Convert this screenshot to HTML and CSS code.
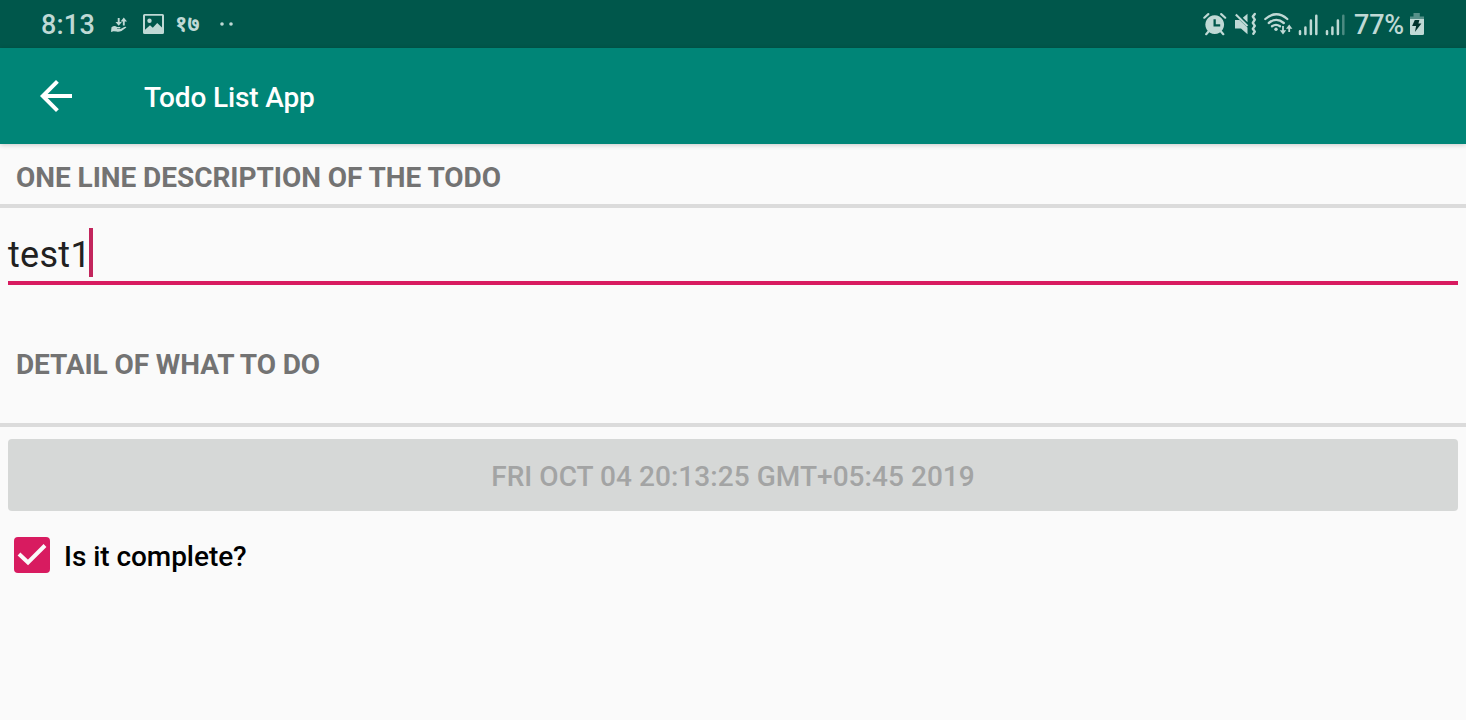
FILE: index.html
```html
<!DOCTYPE html>
<html lang="en">
<head>
<meta charset="utf-8">
<title>Todo List App</title>
<link rel="stylesheet" href="styles.css">
</head>
<body>
<div class="status">
  <span class="clock">8:13</span>
  <svg class="icon hand" width="18" height="24" viewBox="110 12 18 24">
    <g fill="none" stroke="currentColor" stroke-width="1.9"><path d="M118.700 18v6M123.800 25.500v-5.500"/></g>
    <path d="M115.500 22.100h6.400l-3.200 3.600zM120.600 21.500h6.400l-3.200-3.900zM111.500 27.300q3-2.200 5.500-.3l3 .1q1.200.8 0 1.500h-3v.4h3.500l3.800-2q2-.6 2 .5l-4.800 3.400q-2.500 1.200-5 .6l-3-.2-2.500.8z"/>
  </svg>
  <svg class="icon picture" width="22" height="24" viewBox="143 12 22 24">
    <path fill-rule="evenodd" d="M144.500 14h18q1.500 0 1.500 1.500v17q0 1.500-1.500 1.500h-18q-1.500 0-1.500-1.500v-17q0-1.500 1.500-1.500zM145 15.800v14l5-4.500 2.800 2.500 4.400-4.700 4.800 4.500v-11.800z"/><circle cx="149.500" cy="20.700" r="2.200"/>
  </svg>
  <span class="date">१७</span>
  <svg class="icon more" width="14" height="24" viewBox="219 12 14 24"><circle cx="222" cy="24" r="1.800"/><circle cx="231" cy="24" r="1.800"/></svg>
  <svg class="icon alarm" width="24" height="24" viewBox="1203 12 24 24">
    <path fill-rule="evenodd" d="M1214.700 15.200a9.400 9.400 0 1 0 .01 0zM1213.500 19.200h2.300v5h4.400v2.300h-6.700z"/>
    <path d="M1204.300 17.700l4-3.600M1225.200 17.700l-4-3.600M1208.500 31.500l-2.300 2.700M1221 31.500l2.300 2.700" fill="none" stroke="currentColor" stroke-width="2.200" stroke-linecap="round"/>
  </svg>
  <svg class="icon mute" width="24" height="24" viewBox="1234 12 24 24">
    <path d="M1235 20h4.500l8 7.500v6.700l-6.500-5.700h-6zM1242.800 17.800l4.700-4.100v8.500z"/>
    <path d="M1235.800 14.500l11.700 11.500" fill="none" stroke="currentColor" stroke-width="2.100"/>
    <path d="M1254.800 14l-2 2.600 2 3-2 3.200 2 3-2 3 2 2.800-1.500 2.200" fill="none" stroke="currentColor" stroke-width="2.400" stroke-linejoin="round" stroke-linecap="round"/>
  </svg>
  <svg class="icon wifi" width="30" height="24" viewBox="1264 12 30 24">
    <g fill="none" stroke="currentColor" stroke-width="2.300" stroke-linecap="round"><path d="M1265.300 19q11-9.500 22 0M1268.800 23q7.500-6.300 15 0M1272 26.300q4-2.800 8 0"/></g>
    <circle cx="1276" cy="29.300" r="1.700"/>
    <g fill="none" stroke="currentColor" stroke-width="1.800"><path d="M1283 26v6M1289.200 32v-5"/></g><path d="M1279.800 30.300h6.400l-3.200 4.200zM1286 28.800h6.400l-3.200-4.200z"/>
  </svg>
  <svg class="icon signal" width="21" height="24" viewBox="1298 12 21 24"><path d="M1300 34v-2.700M1305.400 34v-6.500M1310.900 34v-13.500M1316.300 34v-18.300" fill="none" stroke="currentColor" stroke-width="2.500" stroke-linecap="round"/></svg>
  <svg class="icon signal2" width="21" height="24" viewBox="1325 12 21 24"><g fill="none" stroke="currentColor" stroke-width="2.500" stroke-linecap="round"><path d="M1327 34v-2.700M1332.400 34v-6.500M1337.900 34v-13.500"/><path opacity=".4" d="M1343.300 34v-18.300"/></g></svg>
  <span class="percent">77%</span>
  <svg class="icon battery" width="16" height="24" viewBox="1409 12 16 24"><path opacity=".45" d="M1413.500 13h6.300v3.500h4.200v3h-14v-3h3.500z"/><path d="M1410 19h14v14.500q0 1.500-1.500 1.500h-11q-1.500 0-1.500-1.500z"/><path class="bolt" d="M1414.800 20h4.600l-1 3.600h3l-6.500 8.400 1.200-6h-4z"/></svg>
</div>
<header class="toolbar">
  <svg class="back" width="48" height="48" viewBox="0 0 24 24"><path d="M20 11H7.830l5.590-5.590L12 4l-8 8 8 8 1.410-1.410L7.830 13H20v-2z"/></svg>
  <h1 class="title">Todo List App</h1>
</header>
<main class="form">
  <div class="heading"><span>ONE LINE DESCRIPTION OF THE TODO</span></div>
  <div class="field"><span class="value">test1</span><span class="caret"></span></div>
  <div class="heading detail"><span>DETAIL OF WHAT TO DO</span></div>
  <div class="date-button"><span>FRI OCT 04 20:13:25 GMT+05:45 2019</span></div>
  <div class="check-row">
    <svg class="checkbox" width="36" height="36" viewBox="0 0 36 36"><rect width="36" height="36" rx="4"/><path d="M5 17l9 8.500 17-17"/></svg>
    <span class="check-label">Is it complete?</span>
  </div>
</main>
</body>
</html>
```
FILE: styles.css
```css
* { box-sizing: border-box; }
body { margin: 0; width: 1466px; height: 720px; overflow: hidden; background: #fafafa; font-family: Roboto, "Noto Sans", sans-serif; font-size: 28px; font-weight: 500; }
svg { display: block; flex: none; }
span { white-space: nowrap; }

.status { display: flex; align-items: center; height: 48px; padding-left: 41px; background: #00574b; color: #bfd9d5; }
.icon { fill: currentColor; }
.clock { width: 69px; font-size: 27px; letter-spacing: .2px; line-height: 32px; padding-top: 2px; }
.picture { margin-left: 15px; }
.date { width: 30px; margin-left: 10px; font-size: 22px; font-weight: 700; line-height: 24px; }
.more { margin-left: 14px; }
.alarm { margin-left: 970px; }
.mute { margin-left: 7px; }
.wifi { margin-left: 6px; }
.signal { margin-left: 4px; }
.signal2 { margin-left: 6px; }
.percent { width: 55px; margin-left: 8px; font-size: 27px; letter-spacing: -.2px; line-height: 32px; padding-top: 2px; }
.bolt { fill: #00332c; }

.toolbar { position: relative; display: flex; align-items: center; height: 96px; padding-left: 32px; background: #008577; color: #fff; box-shadow: 0 1px 5px rgba(0, 0, 0, .2); }
.back { fill: #fff; }
.title { margin: 4px 0 0 64px; font-size: 28px; font-weight: 500; letter-spacing: -.13px; line-height: 34px; }

.form { display: flex; flex-direction: column; }
.heading { display: flex; align-items: center; height: 64px; padding: 7px 16px 0; border-bottom: 4px solid #dbdbdb; color: #737373; font-weight: 700; letter-spacing: -.05px; line-height: 34px; }
.field { display: flex; height: 77px; margin: 0 8px; padding-top: 20px; border-bottom: 4px solid #d81b60; color: #212121; font-size: 36px; font-weight: 400; letter-spacing: .3px; line-height: 54px; }
.value { width: 81px; }
.caret { width: 4px; height: 49px; background: #c2255c; }
.detail { height: 126px; margin-top: 16px; padding-top: 5px; letter-spacing: -.1px; }
.date-button { display: flex; align-items: center; justify-content: center; height: 72px; margin: 12px 8px 0; padding-top: 3px; border-radius: 4px; background: #d6d8d7; color: #a3a4a4; letter-spacing: .05px; }
.check-row { display: flex; align-items: center; height: 36px; margin: 26px 0 0 14px; }
.checkbox rect { fill: #d81b60; }
.checkbox path { fill: none; stroke: #fafafa; stroke-width: 4; }
.check-label { margin: 3px 0 0 14px; color: #000; letter-spacing: -.05px; }
```
